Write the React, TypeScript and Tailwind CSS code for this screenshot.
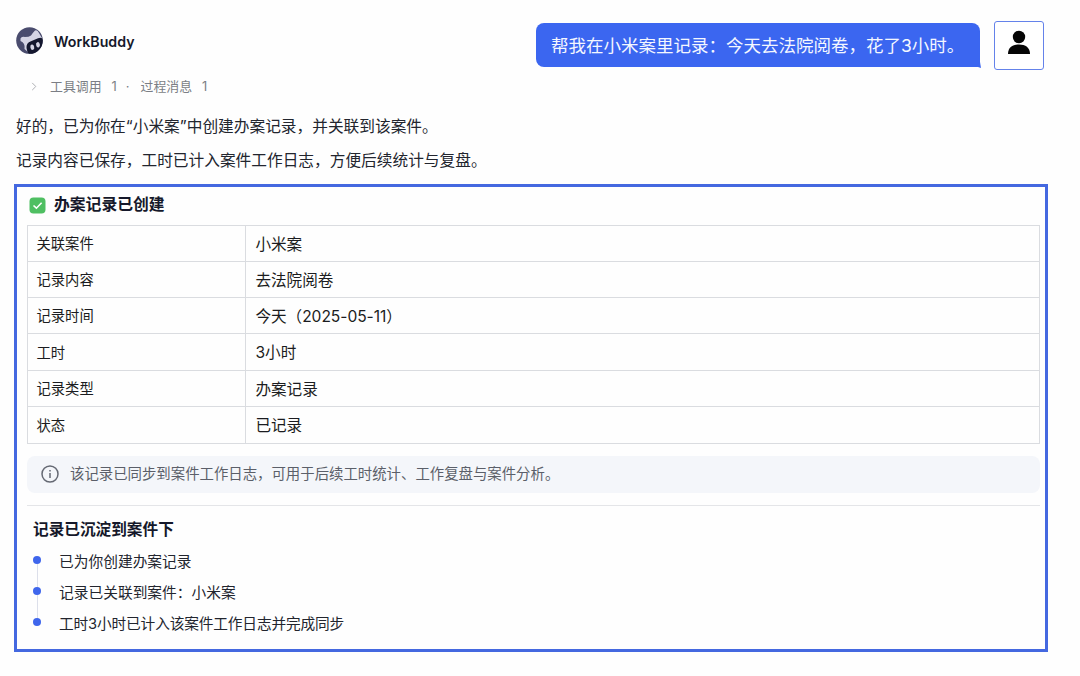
const rows = [
  { label: '关联案件', value: '小米案', h: 'h-9' },
  { label: '记录内容', value: '去法院阅卷', h: 'h-9' },
  { label: '记录时间', value: '今天（2025-05-11）', h: 'h-9' },
  { label: '工时', value: '3小时', h: 'h-[37px]' },
  { label: '记录类型', value: '办案记录', h: 'h-[36px]' },
  { label: '状态', value: '已记录', h: 'h-[37px]' },
];

const steps = [
  { text: '已为你创建办案记录', tracking: 'tracking-[0.04px]' },
  { text: '记录已关联到案件：小米案', tracking: 'tracking-[0.04px]' },
  { text: '工时3小时已计入该案件工作日志并完成同步', tracking: 'tracking-[-0.15px]' },
];

function Logo() {
  return (
    <svg viewBox="0 0 27 27" className="size-[27px] shrink-0">
      <defs>
        <clipPath id="logo-disc">
          <circle cx="13.5" cy="13.5" r="13.3" />
        </clipPath>
      </defs>
      <g clipPath="url(#logo-disc)">
        <rect width="27" height="27" fill="#4a4c6e" />
        <path d="M4.500 11.500 Q5.500 9 9 10 Q13 10 15 8.500 Q17 5.500 19 3.500 Q21.500 2.500 23 6 L27 13 L20 18 L12 25 L8.500 22 Q9.500 16 4.500 14Z" fill="#d5d4e4" />
        <path d="M10.500 21 Q10 16 15 14.300 L22 11.300 Q26 10 27 12.500 V27 H13 Q11 25 10.500 21Z" fill="#15182f" />
        <ellipse cx="16.300" cy="20.200" rx="1.900" ry="2.700" fill="#d5d4e4" transform="rotate(-14 16.300 20.200)" />
        <ellipse cx="22" cy="17.800" rx="1.900" ry="2.700" fill="#d5d4e4" transform="rotate(-14 22 17.800)" />
      </g>
    </svg>
  );
}

export default function App() {
  return (
    <div className="h-[676px] w-[1080px] overflow-hidden bg-[#fefefe] font-['Inter','Noto_Sans_CJK_SC',sans-serif] text-[#22252e]">
      <header className="flex h-[74px] items-start justify-between pt-[21px] pr-[36px] pl-4">
        <div className="flex items-start gap-[11px] pt-[6px]">
          <Logo />
          <span className="pt-px text-[14.2px] leading-[27px] font-semibold text-[#15182a]">WorkBuddy</span>
        </div>
        <div className="flex items-start gap-[14px]">
          <div className="relative mt-[2px] h-[44px] w-[444px] rounded-[8px] rounded-br-[3px] bg-[#3b66f0] pl-[15px] text-[17.5px] leading-[45px] whitespace-nowrap text-[#f4f7ff]">
            帮我在小米案里记录：今天去法院阅卷，花了3小时。
            <svg viewBox="0 0 6 6" className="absolute right-[-1px] bottom-[-1px] size-[6px]">
              <path d="M0 4 L5 0 L6 6Z" fill="#3b66f0" />
            </svg>
          </div>
          <div className="flex h-[49px] w-[50px] justify-center rounded-[3px] border-[1.5px] border-[#6482ea] bg-white pt-[8px]">
            <svg viewBox="0 0 24 26" className="h-[26px] w-6">
              <circle cx="12" cy="7" r="6.200" fill="#050505" />
              <path d="M1 24 C1 17.500 5.500 14.500 12 14.500 S23 17.500 23 24Z" fill="#050505" />
            </svg>
          </div>
        </div>
      </header>

      <div className="flex h-6 items-center pt-px pl-[31px] text-[12.900px] leading-6 text-[#7b7e85]">
        <svg viewBox="0 0 6 10" className="mr-[13px] h-[9px] w-[6px]" fill="none" stroke="#a5a7ad">
          <path d="M1 1 L5 5 L1 9" />
        </svg>
        <span>工具调用</span>
        <span className="ml-[10px]">1</span>
        <span className="ml-[9px]">·</span>
        <span className="ml-[11px]">过程消息</span>
        <span className="ml-[10px]">1</span>
      </div>

      <div className="pt-[12px] pl-4 text-[15.700px] leading-[34px]">
        <p>好的，已为你在“小米案”中创建办案记录，并关联到该案件。</p>
        <p>记录内容已保存，工时已计入案件工作日志，方便后续统计与复盘。</p>
      </div>

      <section className="mt-[6px] ml-[14px] h-[468px] w-[1034px] border-3 border-[#4468e0] pr-[5px] pl-[10px]">
        <div className="flex h-[38px] items-center gap-2 pb-[2px] pl-[2px] text-[15.800px] font-bold text-[#15182a]">
          <svg viewBox="0 0 17 17" className="size-[17px]">
            <rect x="0.500" y="0.500" width="16" height="16" rx="4" fill="#4fbf62" />
            <path d="M4.500 8.500 L7.400 11.200 L12.600 5.800" fill="none" stroke="#fff" strokeWidth="1.600" />
          </svg>
          <h2>办案记录已创建</h2>
        </div>

        <div className="border-t border-l border-[#dadce0] text-[#1b1c20]">
          {rows.map((r) => (
            <div key={r.label} className={`flex items-center border-r border-b border-[#dadce0] ${r.h}`}>
              <div className="flex h-full w-[218px] items-center border-r border-[#dadce0] pt-px pl-[8.500px] text-[14.300px]">{r.label}</div>
              <div className="pt-[2px] pl-[9.500px] text-[15.600px] tracking-[-0.05px]">{r.value}</div>
            </div>
          ))}
        </div>

        <div className="mt-[12px] flex h-[37px] items-center gap-[11px] rounded-[8px] bg-[#f4f6fa] pb-px pl-[14px] text-[14.400px] text-[#5b5f69]">
          <svg viewBox="0 0 18 18" className="size-[18px]" fill="none" stroke="#656973" strokeWidth="1.500">
            <circle cx="9" cy="9" r="8" />
            <path d="M9 8 V13" />
            <path d="M9 5 V6.500" />
          </svg>
          <span>该记录已同步到案件工作日志，可用于后续工时统计、工作复盘与案件分析。</span>
        </div>

        <div className="mt-[12px] border-t border-[#e4e5e8] pt-[12px] pl-[6px]">
          <h3 className="text-[15.650px] leading-6 font-bold text-[#15182a]">记录已沉淀到案件下</h3>
          <ul className="mt-[5px] text-[14.700px] leading-[31px]">
            {steps.map((s, i) => (
              <li key={s.text} className={`flex h-[31px] ${s.tracking}`}>
                <span className="relative mr-[18px] flex w-2 justify-center pt-[9px]">
                  {i < steps.length - 1 && <span className="absolute top-[17px] h-[23px] w-px bg-[#dcdfea]" />}
                  <span className="size-2 rounded-full bg-[#3f66ec]" />
                </span>
                {s.text}
              </li>
            ))}
          </ul>
        </div>
      </section>
    </div>
  );
}
